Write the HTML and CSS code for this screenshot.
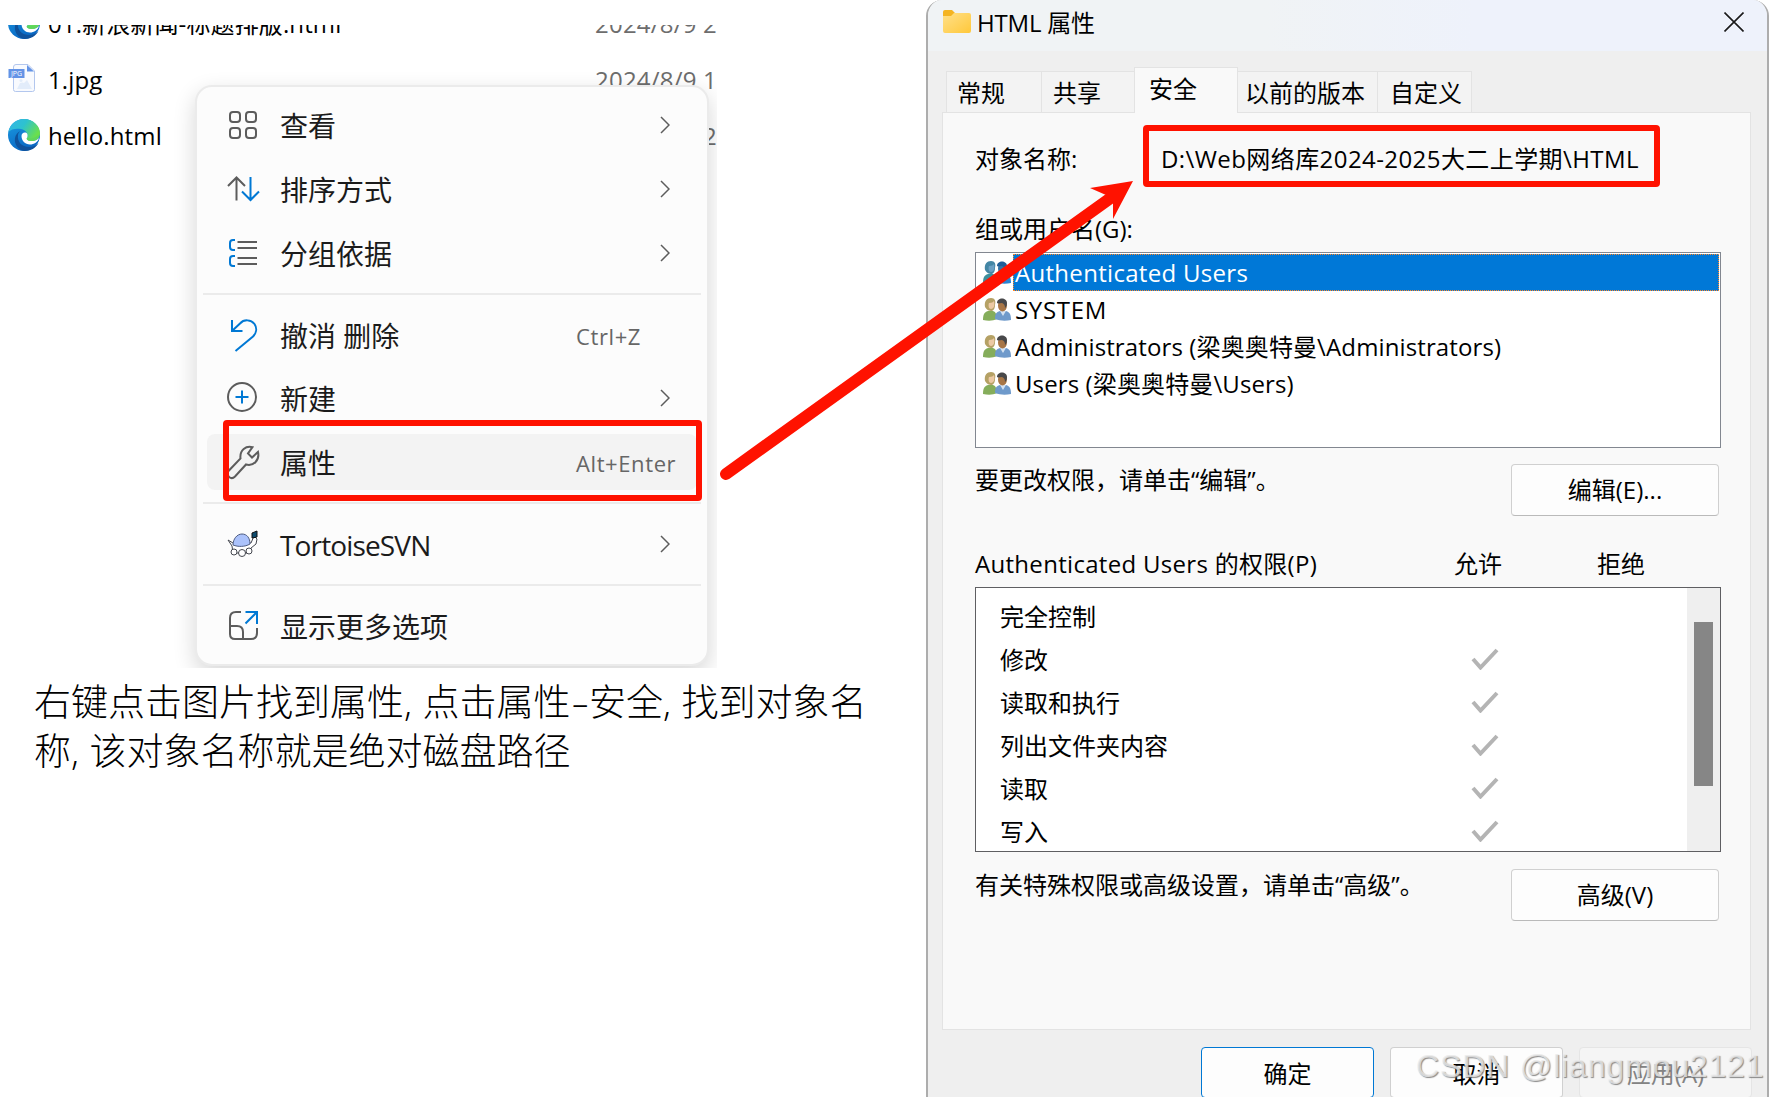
FILE: index.html
```
<!DOCTYPE html>
<html lang="zh-CN">
<head>
    <meta charset="UTF-8">
    <meta name="viewport" content="width=device-width, initial-scale=1.0">
    <title>HTML 属性</title>
    <link rel="stylesheet" href="styles.css">
</head>
<body>
    <!-- shared icons -->
    <svg class="defs">
        <defs>
            <linearGradient id="edgeTop" x1="0" y1="0" x2="1" y2="0.5">
                <stop offset="0" stop-color="#35b4ea"/>
                <stop offset="0.5" stop-color="#2dc2cf"/>
                <stop offset="1" stop-color="#6be04b"/>
            </linearGradient>
            <linearGradient id="edgeLeft" x1="0" y1="0" x2="0.4" y2="1">
                <stop offset="0" stop-color="#1b9de2"/>
                <stop offset="1" stop-color="#0a68c4"/>
            </linearGradient>
            <linearGradient id="folder" x1="0" y1="0" x2="1" y2="1">
                <stop offset="0" stop-color="#ffe08a"/>
                <stop offset="1" stop-color="#ffc83a"/>
            </linearGradient>
            <symbol id="edge" viewBox="0 0 32 32">
                <circle cx="16" cy="16" r="16" fill="url(#edgeLeft)"/>
                <path d="M0.4 13C2 5 8 0 16 0c9 0 16 7 16 14 0 5-3.500 8-8 8-4 0-6-1.500-5-3 2-4-1-8-6-9C8 9 3 10 0.400 13z" fill="url(#edgeTop)"/>
                <path d="M10 16c-1 7 4 12 11 12 4 0 7-1.500 9.500-4C28 29 22.500 32 16.500 32 10 31 6 25 7 19c.5-3 2.500-6 6-7-2 1-3 2.500-3 4z" fill="#0f529c"/>
                <path d="M13.500 17c0-2.500 2-4 4-3.500 2.500.7 2.500 3.500 1.500 5.500-1 1.500 1 3 5 3 3 0 5-1 7-3-1 4-5 6.500-9 6.500-5 0-8.500-4-8.500-8.500z" fill="#fff"/>
                <path d="M19 19c-1 1.500 1 3 5 3 5 0 8-4 8-8-2 4-8 6-13 5z" fill="#5fd65c"/>
            </symbol>
            <symbol id="chevron" viewBox="0 0 10 18">
                <path d="M1 1l8 8-8 8" fill="none" stroke="#5c5c5c" stroke-width="1.500"/>
            </symbol>
            <symbol id="check" viewBox="0 0 28 22">
                <path d="M2 11l7.500 8.500L26 2" fill="none" stroke="#b4b4b4" stroke-width="4"/>
            </symbol>
            <symbol id="users" viewBox="0 0 28 23">
                <path d="M0 22c0-5 1-8 5-9h5c3 1 4 4 4 8-4 2-9 2-14 1z" fill="#85ad5b"/>
                <path d="M2 9c-1-6 2-9 6-9s5 3 4 7c0 4-2 6-4 6S4 12 2 9z" fill="#b5a165"/>
                <path d="M6 5c3 0 4-1 5-2 1 4 0 8-3 8-2 0-3-3-2-6z" fill="#ecc9a4"/>
                <path d="M12 21c0-5 1-7 5-8h6c4 1 5 4 5 9-5 1-11 1-16-1z" fill="#6f9acb"/>
                <path d="M17 13l3 5 3-5z" fill="#d4e2f2"/>
                <ellipse cx="19.500" cy="7.500" rx="4.500" ry="6" fill="#a87646"/>
                <path d="M14 5c0-6 10-6 10 0 0 3-1 4-2 5 0-3-1-4-3-5-2 0-4 1-5 0z" fill="#48484a"/>
            </symbol>
            <symbol id="usersSelected" viewBox="0 0 28 23">
                <path d="M0 22c0-5 1-8 5-9h5c3 1 4 4 4 8-4 2-9 2-14 1z" fill="#3d8f9c"/>
                <path d="M2 9c-1-6 2-9 6-9s5 3 4 7c0 4-2 6-4 6S4 12 2 9z" fill="#4386a5"/>
                <path d="M6 5c3 0 4-1 5-2 1 4 0 8-3 8-2 0-3-3-2-6z" fill="#6ba0c4"/>
                <path d="M12 21c0-5 1-7 5-8h6c4 1 5 4 5 9-5 1-11 1-16-1z" fill="#2d84d2"/>
                <ellipse cx="19.500" cy="7.500" rx="4.500" ry="6" fill="#3474a5"/>
                <path d="M14 5c0-6 10-6 10 0 0 3-1 4-2 5 0-3-1-4-3-5-2 0-4 1-5 0z" fill="#205e98"/>
            </symbol>
        </defs>
    </svg>

    <div class="page">
        <div class="left">
            <div class="explorer">
                <div class="files">
                    <div class="file">
                        <svg class="fileIcon"><use href="#edge"/></svg>
                        <span class="fileName">01.新浪新闻-标题排版.html</span>
                        <span class="date">2024/8/9 2</span>
                    </div>
                    <div class="file">
                        <svg class="fileIcon" viewBox="0 0 32 32">
                            <path d="M5.500 4q0-2.500 2.500-2.500h12l6.500 6.500v18.500q0 2-2 2h-17q-2 0-2-2z" fill="#f8fafe" stroke="#b3c7ee"/>
                            <path d="M19 2l7 6.500h-7z" fill="#6393e6"/>
                            <path d="M9 26l3-6q3-1 4 0l3-3 5 9z" fill="#e2ecfa"/>
                            <circle cx="13" cy="17.500" r="1.500" fill="#e2ecfa"/>
                            <rect x="0.500" y="6" width="16" height="9" fill="#6393e6"/>
                            <text x="8.500" y="13" class="jpgText">JPG</text>
                        </svg>
                        <span class="fileName">1.jpg</span>
                        <span class="date">2024/8/9 1</span>
                    </div>
                    <div class="file">
                        <svg class="fileIcon"><use href="#edge"/></svg>
                        <span class="fileName">hello.html</span>
                        <span class="date">2024/8/9 2</span>
                    </div>
                </div>

                <div class="contextMenu">
                    <div class="item">
                        <svg class="icon" viewBox="0 0 32 32">
                            <g class="dark"><rect x="3" y="3" width="10" height="10" rx="3"/><rect x="19" y="3" width="10" height="10" rx="3"/><rect x="3" y="19" width="10" height="10" rx="3"/><rect x="19" y="19" width="10" height="10" rx="3"/></g>
                        </svg>
                        <span>查看</span>
                        <svg class="chevron"><use href="#chevron"/></svg>
                    </div>
                    <div class="item">
                        <svg class="icon" viewBox="0 0 32 32">
                            <path class="dark" d="M9.500 27.500V4.500M1 13l8.500-8.500L18 13"/>
                            <path class="blue" d="M23.500 4v23M15 18.500l8.500 8.500 8.500-8.500"/>
                        </svg>
                        <span>排序方式</span>
                        <svg class="chevron"><use href="#chevron"/></svg>
                    </div>
                    <div class="item">
                        <svg class="icon" viewBox="0 0 32 32">
                            <path class="dark" d="M10.500 5H30M10.500 11H30M10.500 21H30M10.500 27H30"/>
                            <path class="blue" d="M8 3H6Q3 3 3 6v4q0 3 3 3h2M8 19H6q-3 0-3 3v4q0 3 3 3h2"/>
                        </svg>
                        <span>分组依据</span>
                        <svg class="chevron"><use href="#chevron"/></svg>
                    </div>
                    <div class="line"></div>
                    <div class="item">
                        <svg class="icon" viewBox="0 0 32 32">
                            <path class="blue" d="M5 1v11h10.500M5 12L13 4.500C17 0 24 .5 27.500 5c3 4.500 1.500 9.500-1.500 12.500L8.500 32"/>
                        </svg>
                        <span>撤消 删除</span>
                        <span class="key">Ctrl+Z</span>
                    </div>
                    <div class="item">
                        <svg class="icon" viewBox="0 0 32 32">
                            <circle class="dark" cx="15" cy="15" r="14"/>
                            <path class="blue" d="M15 8.500v13M8.500 15h13"/>
                        </svg>
                        <span>新建</span>
                        <svg class="chevron"><use href="#chevron"/></svg>
                    </div>
                    <div class="item active">
                        <svg class="icon" viewBox="0 0 32 32">
                            <path class="dark" d="M25.500 1.200C19 -.5 12.500 4 13.500 12.500L1.500 25c-3 4.500 2.500 9.500 6.500 5.500L19 18.500c7 2 14-4 12-12.500l-6 5.500-4-4z"/>
                        </svg>
                        <span>属性</span>
                        <span class="key">Alt+Enter</span>
                    </div>
                    <div class="line"></div>
                    <div class="item">
                        <svg class="icon" viewBox="0 0 32 32">
                            <path d="M1 12l5 3h18l3-7 3 3-1 5-5 4-2 5H6l-1-7z" fill="#fff" stroke="#44474f"/>
                            <path d="M6 17c0-6 4-11 9-11s8 4 8 10c-5 3-12 3-17 1z" fill="#abc2fb" stroke="#4e5c82"/>
                            <circle cx="7" cy="24" r="3" fill="#fff" stroke="#44474f"/>
                            <circle cx="15" cy="25" r="3.500" fill="#fff" stroke="#44474f"/>
                            <circle cx="22" cy="23" r="3" fill="#fff" stroke="#44474f"/>
                            <path d="M25 5l5-2v6l-5 1z" fill="#0d4b6e" stroke="#111"/>
                        </svg>
                        <span class="svn">TortoiseSVN</span>
                        <svg class="chevron"><use href="#chevron"/></svg>
                    </div>
                    <div class="line"></div>
                    <div class="item">
                        <svg class="icon" viewBox="0 0 32 32">
                            <path class="dark" d="M14 2H9Q3 2 3 8v16q0 5 5 5h16q6 0 6-6v-5M3 16h7q6 0 6 6v7"/>
                            <path class="blue" d="M18.500 2H30v12M30 2L18.500 13.500"/>
                        </svg>
                        <span>显示更多选项</span>
                    </div>
                </div>
            </div>

            <p class="note">右键点击图片找到属性<span class="half">,</span>点击属性<span class="half dash">-</span>安全<span class="half">,</span>找到对象名<br>称<span class="half">,</span>该对象名称就是绝对磁盘路径</p>
        </div>

        <div class="dialog">
            <div class="titleBar">
                <svg class="folder" viewBox="0 0 28 24">
                    <path d="M0 2q0-2 2-2h7l3 3-3 4H0z" fill="#f4b422"/>
                    <path d="M0 6h8l3-3h15q2 0 2 2v16q0 2-2 2H2q-2 0-2-2z" fill="url(#folder)"/>
                </svg>
                <span class="title">HTML 属性</span>
                <svg class="close" viewBox="0 0 20 20"><path d="M0.500 0.500l19 19M19.500 0.500l-19 19" stroke="#1a1a1a" stroke-width="1.600"/></svg>
            </div>

            <div class="tabs">
                <div class="tab t1">常规</div>
                <div class="tab t2">共享</div>
                <div class="tab selected">安全</div>
                <div class="tab t4">以前的版本</div>
                <div class="tab t5">自定义</div>
            </div>

            <div class="panel">
                <div class="objectRow">
                    <span>对象名称:</span>
                    <span class="path">D:\Web网络库2024-2025大二上学期\HTML</span>
                </div>

                <div class="label">组或用户名(G):</div>
                <div class="userList">
                    <div class="user"><svg><use href="#usersSelected"/></svg><span class="userName current">Authenticated Users</span></div>
                    <div class="user"><svg><use href="#users"/></svg><span class="userName system">SYSTEM</span></div>
                    <div class="user"><svg><use href="#users"/></svg><span class="userName">Administrators (梁奥奥特曼\Administrators)</span></div>
                    <div class="user"><svg><use href="#users"/></svg><span class="userName">Users (梁奥奥特曼\Users)</span></div>
                </div>

                <div class="actionRow">
                    <span>要更改权限，请单击“编辑”。</span>
                    <button>编辑(E)...</button>
                </div>

                <div class="permHead">
                    <span class="permTitle">Authenticated Users 的权限(P)</span>
                    <span class="allow">允许</span>
                    <span>拒绝</span>
                </div>
                <div class="permList">
                    <div class="perms">
                        <div class="perm">完全控制</div>
                        <div class="perm">修改<svg><use href="#check"/></svg></div>
                        <div class="perm">读取和执行<svg><use href="#check"/></svg></div>
                        <div class="perm">列出文件夹内容<svg><use href="#check"/></svg></div>
                        <div class="perm">读取<svg><use href="#check"/></svg></div>
                        <div class="perm">写入<svg><use href="#check"/></svg></div>
                    </div>
                    <div class="scrollbar"><div class="thumb"></div></div>
                </div>

                <div class="actionRow">
                    <span>有关特殊权限或高级设置，请单击“高级”。</span>
                    <button>高级(V)</button>
                </div>
            </div>

            <div class="footer">
                <button class="ok">确定</button>
                <button>取消</button>
                <button class="disabled">应用(A)</button>
            </div>
        </div>

        <!-- red marks over both windows -->
        <svg class="marks" viewBox="0 0 1772 1097">
            <rect x="226" y="423" width="473" height="75" rx="1"/>
            <rect x="1146" y="128" width="511" height="56" rx="1"/>
            <path class="shaft" d="M726 474L1112 197"/>
            <path class="head" d="M1133 181L1090 188l16 7 7 8v16z"/>
        </svg>
        <div class="watermark">CSDN @liangmou2121</div>
    </div>
</body>
</html>
```
FILE: styles.css
```
*{
    box-sizing: border-box;
}

body{
    margin: 0;
    background-color: white;
    font-family: "Open Sans", "Noto Sans CJK SC", sans-serif;
    font-size: 24px;
    color: black;
}

svg{
    display: block;
    flex: none;
}

.defs{
    position: absolute;
    width: 0;
    height: 0;
}

.page{
    position: relative;
    display: flex;
    width: 1772px;
    height: 1097px;
    overflow: hidden;
    white-space: nowrap;
}

.left{
    width: 926px;
    padding-top: 25px;
}

/* file list */
.explorer{
    position: relative;
    width: 717px;
    height: 643px;
    overflow: hidden;
}

.files{
    margin-top: -30px;
}

.file{
    display: flex;
    align-items: center;
    height: 56px;
    padding-left: 8px;
    line-height: 32px;
}

.fileIcon{
    width: 32px;
    height: 32px;
    margin-right: 8px;
}

.fileName{
    width: 548px;
    padding-top: 2px;
    letter-spacing: 0.12px;
}

.date{
    padding-top: 1px;
    color: #6d6d6d;
    letter-spacing: 0.2px;
}

.jpgText{
    font-size: 7px;
    fill: white;
    text-anchor: middle;
}

/* context menu */
.contextMenu{
    position: absolute;
    left: 195px;
    top: 60px;
    display: flex;
    flex-direction: column;
    width: 514px;
    height: 581px;
    padding: 6px 0;
    background-color: #fcfcfc;
    border: 2px solid #ebebeb;
    border-radius: 17px;
    box-shadow: 0 8px 22px rgba(0, 0, 0, 0.16);
}

.item{
    display: flex;
    align-items: center;
    height: 56px;
    margin: 4px 10px;
    padding-left: 20px;
    border-radius: 8px;
    font-size: 28px;
    line-height: 40px;
    color: #1b1b1b;
}

.item span{
    padding-top: 2px;
}

.item.active{
    background-color: #f3f3f3;
}

.icon{
    width: 32px;
    height: 32px;
    margin-right: 21px;
    overflow: visible;
}

.dark{
    fill: none;
    stroke: #5c5c5c;
    stroke-width: 2;
}

.blue{
    fill: none;
    stroke: #0078d4;
    stroke-width: 2;
}

.chevron{
    width: 10px;
    height: 18px;
    margin-left: auto;
    margin-right: 27px;
}

.svn{
    letter-spacing: -0.85px;
}

.key{
    margin-left: auto;
    width: 121px;
    font-size: 22px;
    letter-spacing: 0.6px;
    color: #666;
}

.line{
    height: 2px;
    margin: 8px 6px;
    background-color: #ebebeb;
}

.note{
    margin: 9px 0 0 34px;
    font-size: 37px;
    font-weight: 300;
    line-height: 49px;
}

.half{
    display: inline-block;
    width: 0.5em;
}

.dash{
    text-align: center;
    transform: scaleX(1.5);
}

/* properties window */
.dialog{
    width: 843px;
    height: 1110px;
    border: 2px solid #adadad;
    border-top: none;
    border-radius: 16px 16px 0 0;
    background-color: #efefef;
    overflow: hidden;
}

.titleBar{
    display: flex;
    align-items: center;
    height: 51px;
    padding: 0 23px 7px 15px;
    background: linear-gradient(to right, #f0f3f5 40%, #eef2fb 65%);
}

.folder{
    width: 28px;
    height: 24px;
    margin-right: 6px;
}

.title{
    padding-bottom: 2px;
    letter-spacing: -0.2px;
}

.close{
    width: 20px;
    height: 20px;
    margin-left: auto;
}

.tabs{
    display: flex;
    align-items: flex-end;
    height: 62px;
    padding-left: 18px;
}

.tab{
    height: 42px;
    border: 1px solid #e3e3e3;
    border-left: none;
    background-color: #f3f3f3;
    padding-left: 12px;
    line-height: 42px;
}

.t1{
    width: 96px;
    padding-left: 10px;
    border-left: 1px solid #e3e3e3;
}

.t2{
    width: 92px;
    padding-left: 11px;
    border-right: none;
}

.t4{
    width: 140px;
    padding-left: 7px;
}

.t5{
    width: 94px;
}

.selected{
    width: 104px;
    height: 46px;
    padding-left: 14px;
    border-left: 1px solid #e3e3e3;
    border-bottom: none;
    background-color: #f9f9f9;
    z-index: 1;
}

.panel{
    height: 918px;
    margin: -1px 16px 0 14px;
    padding: 28px 29px 0 32px;
    border: 1px solid #e3e3e3;
    background-color: #f9f9f9;
    line-height: 36px;
}

.objectRow{
    display: flex;
    height: 70px;
}

.objectRow span:first-child{
    width: 186px;
}

.path{
    letter-spacing: 0.42px;
}

.label{
    height: 41px;
}

.userList{
    height: 196px;
    padding: 1px;
    border: 1px solid #828790;
    background-color: white;
}

.user{
    display: flex;
    align-items: center;
    height: 37px;
    padding-left: 6px;
}

.user svg{
    width: 28px;
    height: 23px;
    margin-right: 2px;
}

.userName{
    flex: 1;
    height: 37px;
    padding-left: 2px;
    line-height: 37px;
    letter-spacing: 0.12px;
}

.system{
    letter-spacing: 0.7px;
}

.current{
    padding-left: 1px;
    border: 1px dotted #ff8728;
    background-color: #0078d7;
    color: white;
    line-height: 35px;
    letter-spacing: 0.3px;
}

.actionRow{
    display: flex;
    justify-content: space-between;
    height: 98px;
    padding: 16px 2px 0 0;
}

.actionRow span{
    margin-top: -2px;
}

button{
    width: 208px;
    height: 52px;
    padding: 0 0 1px;
    border: 1px solid #d0d0d0;
    border-bottom-color: #bababa;
    border-radius: 4px;
    background-color: #fdfdfd;
    color: black;
    font: inherit;
}

.permHead{
    display: flex;
    height: 41px;
}

.permTitle{
    width: 479px;
    letter-spacing: 0.3px;
}

.allow{
    width: 143px;
}

.permList{
    display: flex;
    height: 265px;
    margin-bottom: 1px;
    border: 1px solid #5f5f62;
    background-color: white;
    overflow: hidden;
}

.perms{
    flex: 1;
    padding: 7px 0 0 24px;
}

.perm{
    position: relative;
    height: 43px;
    line-height: 43px;
}

.perm svg{
    position: absolute;
    left: 471px;
    top: 10px;
    width: 28px;
    height: 22px;
}

.scrollbar{
    width: 33px;
    padding: 34px 0 0 7px;
    background-color: #efefef;
}

.thumb{
    width: 19px;
    height: 164px;
    background-color: #868686;
}

.footer{
    display: flex;
    gap: 16px;
    margin: 17px 0 0 273px;
}

.footer button{
    width: 173px;
    height: 51px;
}

.footer .ok{
    border-color: #0078d4;
}

.footer .disabled{
    border-color: #e5e5e5;
    background-color: #f5f5f5;
    color: #838383;
}

.marks{
    position: absolute;
    left: 0;
    top: 0;
    width: 1772px;
    height: 1097px;
}

.marks rect, .shaft{
    fill: none;
    stroke: #ff1200;
    stroke-width: 6;
}

.marks .shaft{
    stroke-width: 12;
    stroke-linecap: round;
}

.head{
    fill: #ff1200;
}

.watermark{
    position: absolute;
    left: 1416px;
    top: 1046px;
    font-family: "Liberation Sans", sans-serif;
    font-size: 32px;
    line-height: 40px;
    letter-spacing: 0.85px;
    color: rgba(235, 235, 235, 0.8);
    text-shadow: 1px 1px 1px rgba(110, 110, 110, 0.8);
}
```
